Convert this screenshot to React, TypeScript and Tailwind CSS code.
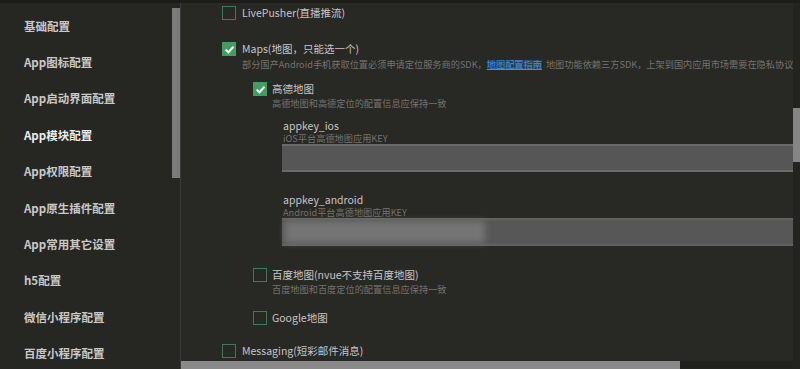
const font = { fontFamily: '"Noto Sans CJK SC", "Noto Sans", sans-serif' };

const menu = [
  "基础配置",
  "App图标配置",
  "App启动界面配置",
  "App模块配置",
  "App权限配置",
  "App原生插件配置",
  "App常用其它设置",
  "h5配置",
  "微信小程序配置",
  "百度小程序配置",
];

function Check({ checked }: { checked?: boolean }) {
  if (checked) {
    return (
      <span className="flex h-[14px] w-[14px] shrink-0 items-center justify-center bg-[#3f9f60]">
        <svg width="11" height="11" viewBox="0 0 10 10" fill="none">
          <path d="M1.5 5.1 L4 7.5 L8.6 2.5" stroke="#fff" strokeWidth="1.8" />
        </svg>
      </span>
    );
  }
  return <span className="h-[14px] w-[14px] shrink-0 border-[1.5px] border-[#44775a]" />;
}

function Option({ label, checked, className = "" }: { label: string; checked?: boolean; className?: string }) {
  return (
    <div className={`flex h-[16px] items-center ${className}`}>
      <Check checked={checked} />
      <span className="ml-[5px] whitespace-nowrap text-[10.5px] leading-none text-[#c6c6c6]">{label}</span>
    </div>
  );
}

function Desc({ children, className = "" }: { children: React.ReactNode; className?: string }) {
  return (
    <div className={`flex items-center whitespace-nowrap text-[9.2px] leading-none text-[#747470] ${className}`}>
      {children}
    </div>
  );
}

export default function App() {
  return (
    <div className="flex h-[369px] w-[800px] flex-col overflow-hidden bg-[#282824]" style={font}>
      <div className="h-[3px] bg-[#1c1c1a]" />
      <div className="flex min-h-0 flex-1">
        {/* sidebar */}
        <div className="flex w-[181px] shrink-0 bg-[#262622]">
          <div className="flex w-[172px] flex-col pt-[5px]">
            {menu.map((m) => (
              <div
                key={m}
                className={`flex h-[36.4px] shrink-0 items-center pl-[24px] text-[11.5px] font-bold ${
                  m === "App模块配置" ? "text-[#ececec]" : "text-[#c9c9c9]"
                }`}
              >
                {m}
              </div>
            ))}
          </div>
          <div className="w-[9px] border-r border-[#3a3a36]">
            <div className="mt-[5px] h-[170px] w-[8px] bg-[#7b7b7b]" />
          </div>
        </div>

        {/* main */}
        <div className="flex min-w-0 flex-1 flex-col">
          <div className="flex min-h-0 flex-1">
            <div className="flex min-w-0 flex-1 flex-col overflow-hidden pl-[41px]">
              <div className="flex h-[20px] items-center">
                <Check />
                <span className="ml-[6px] whitespace-nowrap text-[10.5px] leading-none text-[#c6c6c6]">LivePusher(直播推流)</span>
              </div>

              <div className="mt-[18px] flex h-[16px] items-center">
                <Check checked />
                <span className="ml-[6px] whitespace-nowrap text-[10.5px] leading-none text-[#c6c6c6]">Maps(地图，只能选一个)</span>
              </div>
              <Desc className="mt-[1px] h-[14px] pl-[20px]">
                部分国产Android手机获取位置必须申请定位服务商的SDK，
                <span className="bg-[#2a3e52] text-[#3f92dc] underline">地图配置指南</span>
                <span className="ml-[4px]">地图功能依赖三方SDK，上架到国内应用市场需要在隐私协议中</span>
              </Desc>

              <div className="pl-[31px]">
                <Option label="高德地图" checked className="mt-[9px]" />
                <Desc className="h-[14px] pl-[19px]">高德地图和高德定位的配置信息应保持一致</Desc>

                <div className="pl-[29px]">
                  <div className="mt-[8px] flex h-[14px] items-center pl-[1px] text-[10.5px] leading-none text-[#c6c6c6]">appkey_ios</div>
                  <Desc className="h-[11px] pl-[1px] text-[#5f5f5c]">iOS平台高德地图应用KEY</Desc>
                  <div className="h-[28px] border-y-2 border-[#6a6a6a] bg-[#565656]" />

                  <div className="mt-[21px] flex h-[14px] items-center pl-[1px] text-[10.5px] leading-none text-[#c6c6c6]">appkey_android</div>
                  <Desc className="h-[11px] pl-[1px] text-[#5f5f5c]">Android平台高德地图应用KEY</Desc>
                  <div className="flex h-[28px] items-center border-y-2 border-[#626262] bg-[#575757] pl-[3px]">
                    <div className="h-[22px] w-[200px] bg-[#747474] blur-[3px]" />
                  </div>
                </div>

                <Option label="百度地图(nvue不支持百度地图)" className="mt-[21px]" />
                <Desc className="h-[14px] pl-[19px]">百度地图和百度定位的配置信息应保持一致</Desc>

                <Option label="Google地图" className="mt-[13px]" />
              </div>

              <div className="mt-[17px] flex h-[16px] items-center">
                <Check />
                <span className="ml-[6px] whitespace-nowrap text-[10.5px] leading-none text-[#c6c6c6]">Messaging(短彩邮件消息)</span>
              </div>
            </div>
            <div className="w-[7px] shrink-0 bg-[#232320]">
              <div className="mt-[105px] h-[54px] w-[7px] bg-[#858585]" />
            </div>
          </div>
          <div className="flex h-[8px] shrink-0 bg-[#22221f]">
            <div className="w-[499px] bg-[#8a8a8a]" />
          </div>
        </div>
      </div>
    </div>
  );
}
